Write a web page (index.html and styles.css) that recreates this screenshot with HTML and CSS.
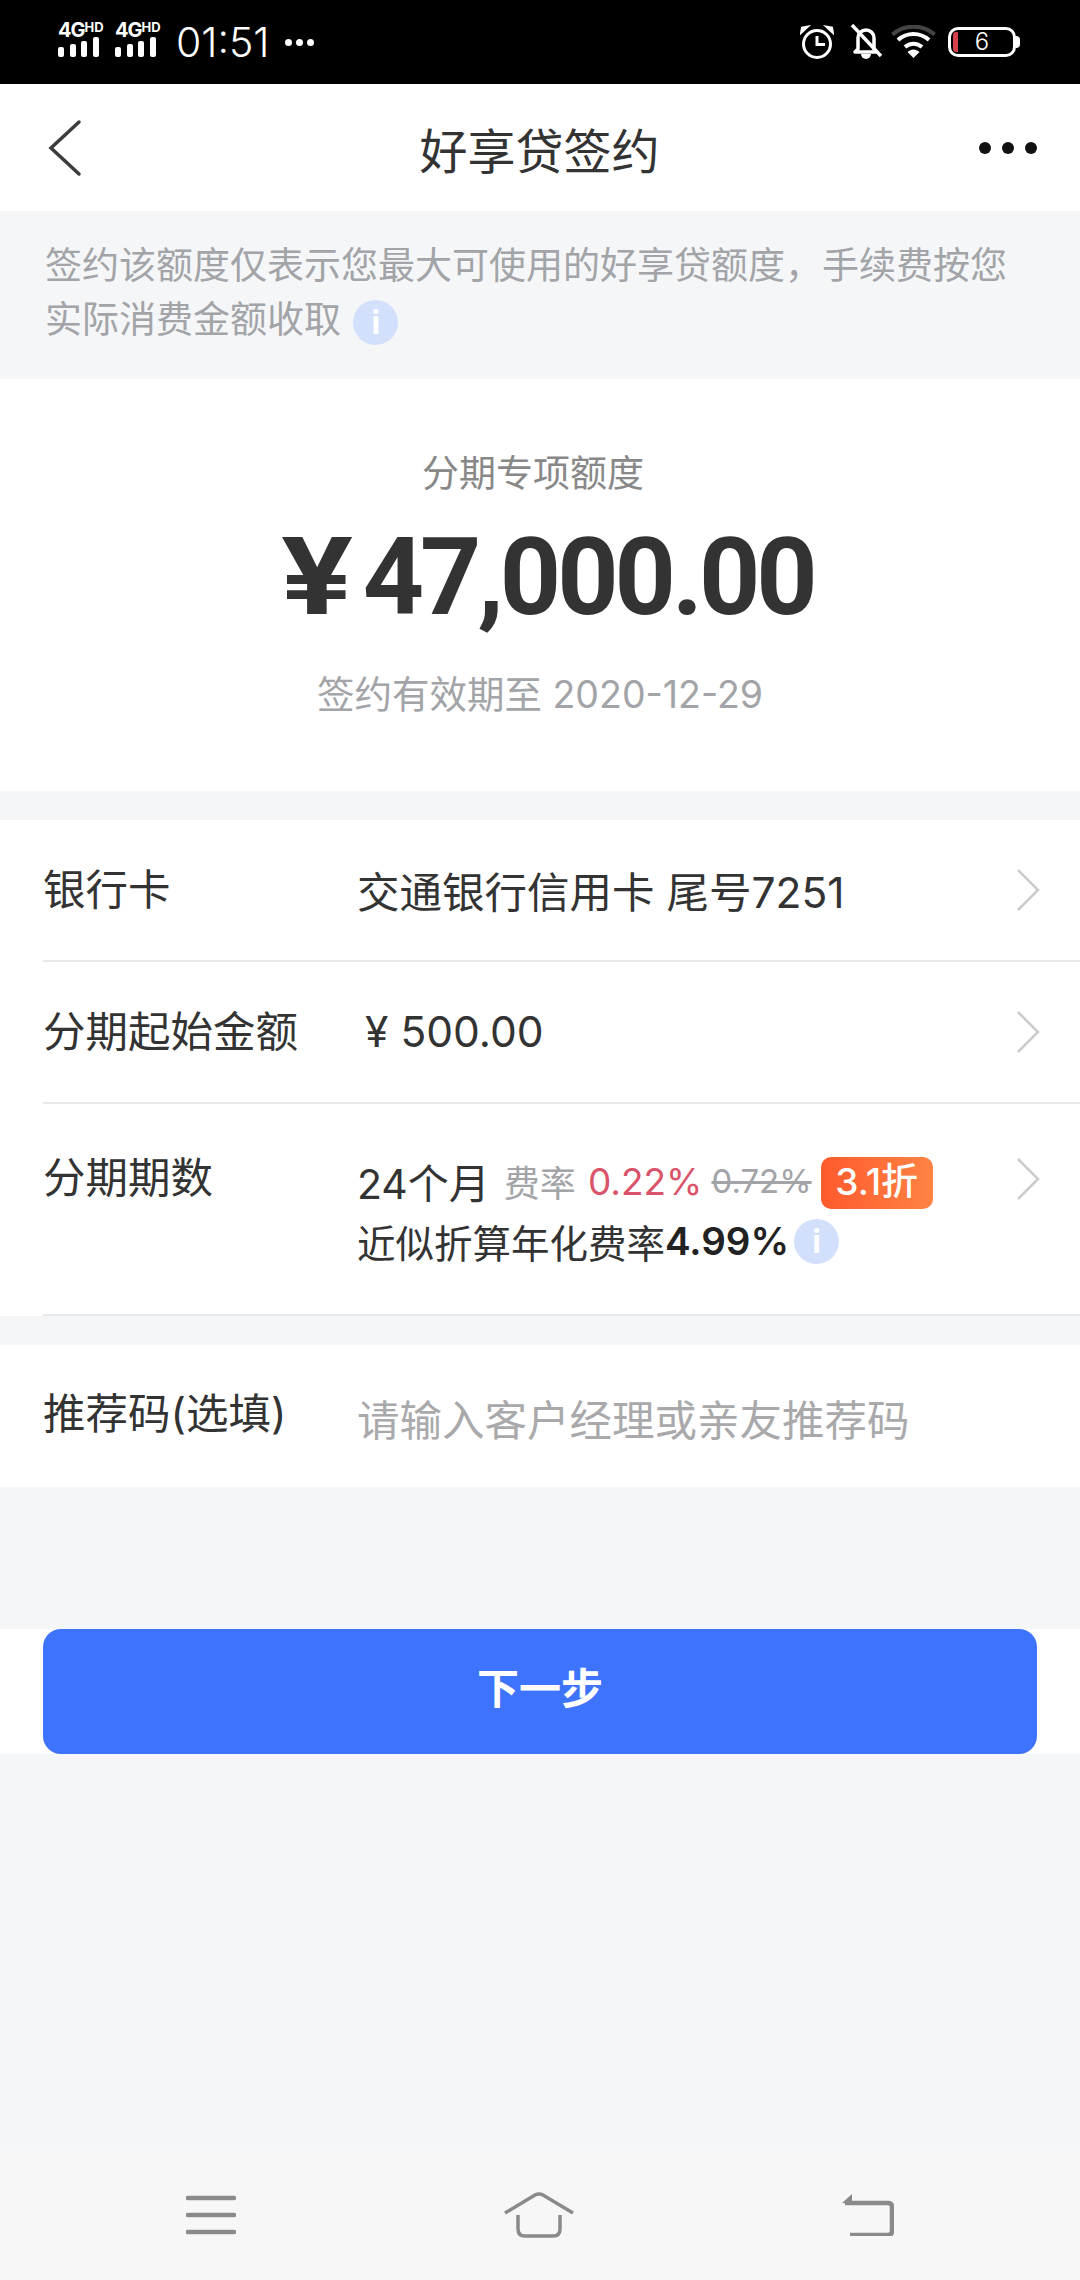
FILE: index.html
```html
<!DOCTYPE html>
<html lang="zh-CN">
<head>
<meta charset="utf-8" />
<title>好享贷签约</title>
<link rel="stylesheet" href="styles.css">
</head>
<body>
<div class="page">
	<div class="status">
		<div class="status-left">
			<div class="net"><div class="net-txt"><b>4G</b><i>HD</i></div><div class="bars"><span class="b1"></span><span class="b2"></span><span class="b3"></span><span class="b4"></span></div></div>
			<div class="net"><div class="net-txt"><b>4G</b><i>HD</i></div><div class="bars"><span class="b1"></span><span class="b2"></span><span class="b3"></span><span class="b4"></span></div></div>
			<span class="time">01:51</span>
			<div class="sdots"><span></span><span></span><span></span></div>
		</div>
		<div class="status-right">
			<svg class="ic-alarm" width="34" height="34" viewBox="0 0 34 34" fill="none" stroke="#fff">
				<circle cx="17" cy="19" r="13.5" stroke-width="3"/>
				<path d="M17 11v8.500h8" stroke-width="3"/>
				<path d="M1 8 8 1.500 2 2.500zM33 8 26 1.500 32 2.500z" fill="#fff" stroke-width="2"/>
			</svg>
			<svg class="ic-bell" width="32" height="36" viewBox="0 0 32 36" fill="none" stroke="#fff">
				<path d="M8 25V14a8 8 0 0 1 16 0v11l3 3H5z" stroke-width="3.500" stroke-linejoin="round"/>
				<path d="M11 30a5 5 0 0 0 10 0z" fill="#fff" stroke="none"/>
				<path d="M2 1 31 32" stroke-width="3.500"/>
			</svg>
			<svg class="ic-wifi" width="45" height="34" viewBox="0 0 45 34" fill="none" stroke="#fff" stroke-width="4">
				<path d="M1.500 9.500C13 -1 32 -1 43.500 9.500" stroke="#444"/>
				<path d="M7 15C16 7 29 7 38 15"/>
				<path d="M14 22C19 17.500 26 17.500 31 22"/>
				<path d="M16.500 27C20 23.500 25 23.500 28.500 27L22.500 33z" fill="#fff" stroke="none"/>
			</svg>
			<div class="batt"><div class="batt-box"><span class="batt-low"></span><span class="batt-num">6</span></div><span class="batt-nub"></span></div>
		</div>
	</div>

	<div class="nav">
		<svg class="back" width="40" height="60" viewBox="0 0 40 60" fill="none" stroke="#3c3c3c" stroke-width="3.500" stroke-linecap="round"><path d="M33 4 5 30l28 26"/></svg>
		<div class="nav-title">好享贷签约</div>
		<div class="more"><span></span><span></span><span></span></div>
	</div>

	<div class="notice">签约该额度仅表示您最大可使用的好享贷额度，手续费按您<br />实际消费金额收取 <span class="info info-top">i</span></div>

	<div class="quota">
		<div class="quota-label">分期专项额度</div>
		<div class="quota-num"><span class="yen">¥</span>47,000.00</div>
		<div class="quota-date">签约有效期至 2020-12-29</div>
	</div>

	<div class="group">
		<div class="row row1">
			<div class="label">银行卡</div>
			<div class="val">交通银行信用卡 尾号7251</div>
			<svg class="arrow" width="24" height="42" viewBox="0 0 24 42" fill="none" stroke="#ccc" stroke-width="2.500"><path d="M2 1l20 20L2 41"/></svg>
		</div>
		<div class="row row1">
			<div class="label">分期起始金额</div>
			<div class="val"><span class="yen-s">¥</span>500.00</div>
			<svg class="arrow" width="24" height="42" viewBox="0 0 24 42" fill="none" stroke="#ccc" stroke-width="2.500"><path d="M2 1l20 20L2 41"/></svg>
		</div>
		<div class="row row3">
			<div class="label">分期期数</div>
			<div class="val">
				<div class="line1">24个月<span class="fee">费率</span><span class="rate">0.22%</span><span class="old">0.72%</span><span class="tag">3.1折</span></div>
				<div class="line2">近似折算年化费率<b>4.99%</b><span class="info">i</span></div>
			</div>
			<svg class="arrow" width="24" height="42" viewBox="0 0 24 42" fill="none" stroke="#ccc" stroke-width="2.500"><path d="M2 1l20 20L2 41"/></svg>
		</div>
	</div>

	<div class="group ref">
		<div class="label">推荐码(选填)</div>
		<div class="hint">请输入客户经理或亲友推荐码</div>
	</div>

	<div class="btn-wrap"><div class="btn">下一步</div></div>

	<div class="sysbar">
		<svg width="50" height="40" viewBox="0 0 50 40" fill="none" stroke="#8a8a8a" stroke-width="4.500" stroke-linecap="round"><path d="M2 3h46M2 20h46M2 37h46"/></svg>
		<svg width="70" height="46" viewBox="0 0 70 46" fill="none" stroke="#8a8a8a" stroke-width="3.500"><path d="M1 21 31 3q4-2 8 0l30 18"/><path d="M14 23v14q0 7 7 7h28q7 0 7-7V23"/></svg>
		<svg width="52" height="42" viewBox="0 0 52 42" fill="none" stroke="#8a8a8a" stroke-width="4.500"><path d="M8 41h38q4 0 4-4V13q0-4-4-4H3"/><path d="M0 9 10 0v10z" fill="#8a8a8a" stroke="none"/></svg>
	</div>
</div>
</body>
</html>
```

FILE: styles.css
```css
*{ margin:0; padding:0; box-sizing:border-box;}
body{ font-family:Inter,"Noto Sans CJK SC",sans-serif; background:#f5f6f8; color:#333;}
.page{ width:1080px; height:2280px; display:flex; flex-direction:column; overflow:hidden;}

.status{ height:84px; background:#000; color:#fff; display:flex; justify-content:space-between; align-items:center; padding:0 60px 0 58px;}
.status-left{ display:flex; align-items:center;}
.net{ width:43px; margin-right:14px; margin-top:-4px;}
.net-txt{ display:flex; height:14px; line-height:14px;}
.net-txt b{ font-size:20px; font-weight:700; letter-spacing:-1px;}
.net-txt i{ font-size:13px; font-weight:700; font-style:normal; line-height:8px;}
.bars{ display:flex; align-items:flex-end; gap:5.500px; height:20px;}
.bars span{ width:6px; background:#fff; border-radius:2px;}
.b1{ height:10px;}
.b2{ height:13px;}
.b3{ height:16px;}
.b4{ height:20px;}
.time{ font-size:41px; line-height:48px; font-weight:300; margin-left:4px;}
.sdots{ display:flex; gap:4px; margin-left:15px;}
.sdots span{ width:7px; height:7px; background:#fff; border-radius:50%;}
.status-right{ display:flex; align-items:center;}
.ic-alarm{ margin-right:16px;}
.ic-bell{ margin-right:9px;}
.ic-wifi{ margin-right:12px;}
.batt{ display:flex; align-items:center;}
.batt-box{ width:68px; height:30px; border:3px solid #fff; border-radius:10px; display:flex; align-items:center; justify-content:center; position:relative;}
.batt-low{ position:absolute; left:2px; top:2px; bottom:2px; width:5px; background:#d6404c; border-radius:3px 0 0 3px;}
.batt-num{ font-size:24px; line-height:24px; font-weight:300;}
.batt-nub{ width:4px; height:12px; background:#fff; border-radius:0 4px 4px 0;}

.nav{ height:127px; background:#fff; display:flex; align-items:center; justify-content:space-between; padding:0 43px 0 46px;}
.nav-title{ font-size:48px; color:#333; margin-left:14px;}
.more{ display:flex; gap:11px;}
.more span{ width:12px; height:12px; background:#111; border-radius:50%;}

.notice{ height:168px; padding:28px 40px 0 45px; font-size:37px; line-height:54px; color:#a2a4a8; white-space:nowrap;}
.info{ display:inline-block; width:45px; height:45px; line-height:45px; border-radius:50%; background:#d3e0fb; color:#fff; font-size:32px; font-weight:700; text-align:center; vertical-align:middle;}
.info-top{ margin-left:2px;}

.quota{ height:412px; background:#fff; text-align:center; padding-top:70px;}
.quota-label{ font-size:37px; line-height:50px; color:#888; margin-right:14px;}
.quota-num{ font-family:Roboto,sans-serif; font-size:107px; line-height:130px; margin-top:14px; font-weight:700; color:#333; letter-spacing:-4px; margin-left:22px;}
.yen{ display:inline-block; margin-right:21px; transform:scaleX(1.25);}
.quota-date{ font-size:37.500px; line-height:50px; color:#a2a4a8; margin-top:27px;}

.group{ background:#fff; margin-top:29px; padding-left:43px;}
.row{ display:flex; border-bottom:2px solid #e8e9ea; padding-right:40px;}
.row1{ height:142px; align-items:center;}
.row3{ height:212px; padding-top:49px;}
.row3 .arrow{ margin-top:5px;}
.label{ width:314px; font-size:42.500px; line-height:56px; color:#333; flex-shrink:0;}
.val{ flex:1; font-size:42.500px; color:#333;}
.row1 .label, .row1 .val{ margin-top:-1px;}
.yen-s{ margin:0 12px 0 8px;}
.arrow{ flex-shrink:0;}
.row3 .label{ margin-top:-3px;}
.line1{ display:flex; align-items:center; height:60px; font-size:41px; margin-top:-2px;}
.fee{ font-size:36px; color:#a2a4a8; margin-left:14px;}
.rate{ font-size:37px; color:#d9536a; margin-left:12px;}
.old{ font-size:33px; color:#a2a4a8; margin-left:9px; text-decoration:line-through;}
.tag{ width:112px; height:52px; line-height:50px; margin-left:9px; margin-top:4px; background:linear-gradient(90deg,#ff5a2c,#ff8344); color:#fff; font-size:37px; font-weight:500; border-radius:10px; text-align:center; flex-shrink:0;}
.line2{ display:flex; align-items:center; height:60px; font-size:38.500px; color:#333;}
.line2 b{ font-weight:600; color:#222;}
.line2 .info{ margin-left:5px;}
.ref{ height:142px; display:flex; align-items:center;}
.ref .label{ margin-top:-4px;}
.hint{ font-size:42.500px; color:#a9a9ab; margin-top:2px;}

.btn-wrap{ background:#fff; margin-top:142px; height:125px; padding:0 43px;}
.btn{ height:125px; background:#3e73fd; border-radius:18px; color:#fff; font-size:42px; font-weight:700; line-height:120px; text-align:center;}

.sysbar{ margin-top:auto; height:130px; background:#f7f7f8; display:flex; align-items:center; justify-content:space-between; padding:0 186px 0;}
```
